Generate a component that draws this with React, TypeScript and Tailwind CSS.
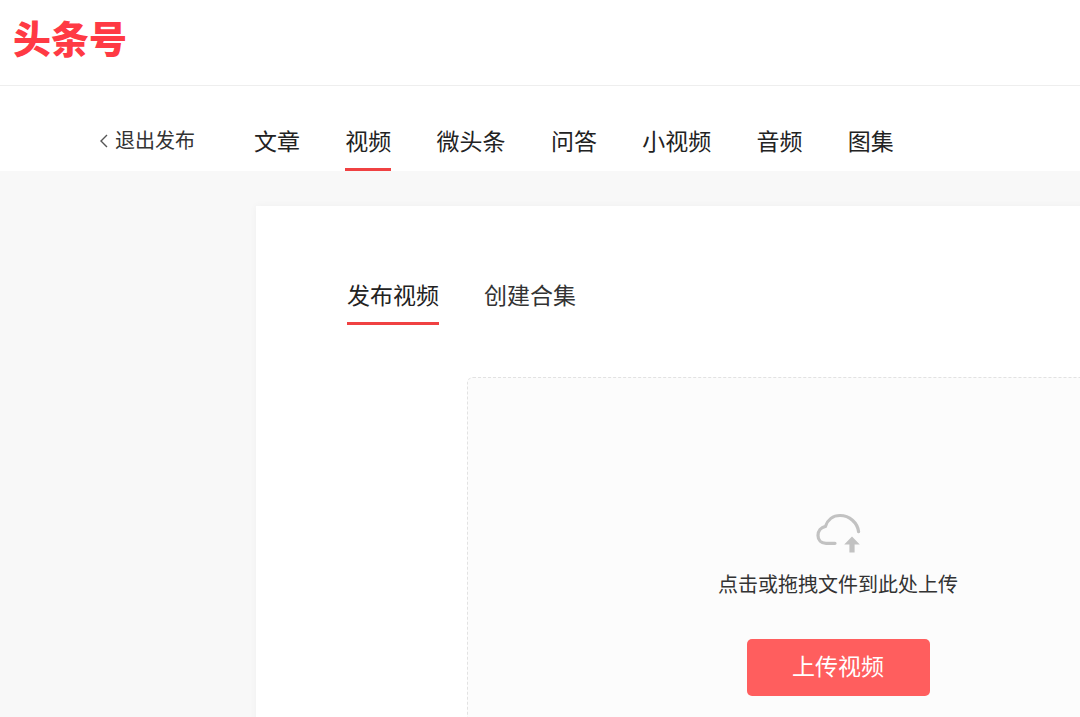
import React from 'react'

const cjk = { fontFamily: '"Liberation Sans", "Noto Sans CJK SC", sans-serif' }

const navItems = ['文章', '视频', '微头条', '问答', '小视频', '音频', '图集']

function CloudUpload() {
  return (
    <svg width="46" height="40" viewBox="0 0 46 40" fill="none" className="block">
      <path
        d="M20 30.3H11C6.2 30.3 3 27 3 22.5C3 18 6 14.4 10.4 13.4C12.6 6.8 18 2.5 25 2.5C34.5 2.5 42.5 9.6 43.6 18.7"
        stroke="#c2c2c2"
        strokeWidth="3.2"
        strokeLinecap="round"
      />
      <path d="M37 23.5L44.8 31.5H39.6V39.5H34.4V31.5H29.2L37 23.5Z" fill="#c2c2c2" />
    </svg>
  )
}

export default function App() {
  return (
    <div className="h-[717px] w-[1080px] overflow-hidden bg-[#f8f8f8] text-[#222]" style={cjk}>
      {/* top bar */}
      <header className="h-[86px] border-b border-[#eeeeee] bg-white pl-[13px] pt-[15px]">
        <div className="text-[38px] leading-[50px] font-black text-[#ff3a44]">头条号</div>
      </header>

      {/* nav */}
      <nav className="flex h-[85px] items-end bg-white pl-[99px]">
        <a className="mb-[15px] flex w-[155px] items-center text-[20px] leading-[30px] text-[#333]">
          <svg width="10" height="16" viewBox="0 0 10 16" fill="none" className="mr-[6px] shrink-0">
            <path d="M8 2L2 8L8 14" stroke="#555" strokeWidth="1.4" />
          </svg>
          退出发布
        </a>
        <div className="flex gap-[45.3px]">
          {navItems.map((item, i) => (
            <a
              key={item}
              className={`h-[44px] border-b-[3px] pt-[1px] text-[23px] leading-[28px] ${
                i === 1 ? 'border-[#f04142]' : 'border-transparent'
              }`}
            >
              {item}
            </a>
          ))}
        </div>
      </nav>

      {/* content */}
      <main className="pl-[256px] pt-[35px]">
        <section className="h-[600px] w-[900px] bg-white pl-[91px] pt-[70px] shadow-[0_0_8px_rgba(0,0,0,0.04)]">
          <div className="flex gap-[45px]">
            <a className="h-[49px] border-b-[3px] border-[#f04142] text-[23px] leading-[40px] text-[#222]">发布视频</a>
            <a className="h-[49px] text-[23px] leading-[40px] text-[#333]">创建合集</a>
          </div>

          <div className="ml-[120px] mt-[52px] flex h-[500px] w-[742px] flex-col items-center rounded-[6px] border border-dashed border-[#e2e2e2] bg-[#fcfcfc] pt-[135px]">
            <CloudUpload />
            <p className="mt-[18px] text-[20px] leading-[28px] text-[#333]">点击或拖拽文件到此处上传</p>
            <button className="mt-[40px] h-[57px] w-[183px] rounded-[5px] bg-[#ff5e5e] text-[23px] text-white">
              上传视频
            </button>
          </div>
        </section>
      </main>
    </div>
  )
}
